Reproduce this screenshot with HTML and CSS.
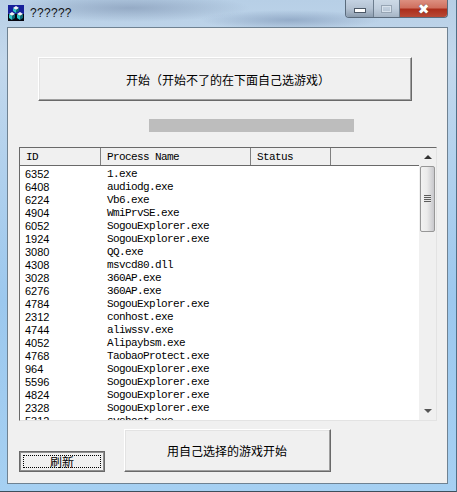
FILE: index.html
```html
<!DOCTYPE html>
<html lang="en">
<head>
    <meta charset="UTF-8">
    <meta name="viewport" content="width=device-width, initial-scale=1.0">
    <title>??????</title>
    <link rel="stylesheet" href="styles.css">
</head>
<body>
    <div class="window">
        <!-- Title bar -->
        <div class="titlebar">
            <div class="title">
                <svg class="app-icon" width="16" height="16" viewBox="0 0 16 16">
                    <rect width="16" height="16" fill="#16209a"/>
                    <rect y="9" width="16" height="7" fill="#05050f"/>
                    <path d="M8 1l3 2-3 2-3-2zM4 7l3 2-3 2-3-2zM12 7l3 2-3 2-3-2z" fill="#f0f6f6"/>
                    <path d="M5 3l3 2v3L5 6zM1 9l3 2v4l-3-2zM9 9l3 2v4l-3-2z" fill="#2fc8c8"/>
                    <path d="M11 3L8 5v3l3-2zM7 9l-3 2v4l3-2zM15 9l-3 2v4l3-2z" fill="#0e6a78"/>
                </svg>
                <span>??????</span>
            </div>
            <div class="controls">
                <div class="ctl ctl-min"><span></span></div>
                <div class="ctl ctl-max"><span></span></div>
                <div class="ctl ctl-close">&#10006;</div>
            </div>
        </div>

        <div class="client">
            <button class="btn btn-start">开始（开始不了的在下面自己选游戏）</button>
            <div class="progress"></div>

            <!-- Process list -->
            <div class="list">
                <div class="list-main">
                    <div class="list-head">
                        <div class="col col-id">ID</div>
                        <div class="col col-name">Process Name</div>
                        <div class="col col-status">Status</div>
                        <div class="col col-rest"></div>
                    </div>
                    <div class="rows">
                        <div class="row"><span class="cell-id">6352</span><span class="cell-name">1.exe</span></div>
                        <div class="row"><span class="cell-id">6408</span><span class="cell-name">audiodg.exe</span></div>
                        <div class="row"><span class="cell-id">6224</span><span class="cell-name">Vb6.exe</span></div>
                        <div class="row"><span class="cell-id">4904</span><span class="cell-name">WmiPrvSE.exe</span></div>
                        <div class="row"><span class="cell-id">6052</span><span class="cell-name">SogouExplorer.exe</span></div>
                        <div class="row"><span class="cell-id">1924</span><span class="cell-name">SogouExplorer.exe</span></div>
                        <div class="row"><span class="cell-id">3080</span><span class="cell-name">QQ.exe</span></div>
                        <div class="row"><span class="cell-id">4308</span><span class="cell-name">msvcd80.dll</span></div>
                        <div class="row"><span class="cell-id">3028</span><span class="cell-name">360AP.exe</span></div>
                        <div class="row"><span class="cell-id">6276</span><span class="cell-name">360AP.exe</span></div>
                        <div class="row"><span class="cell-id">4784</span><span class="cell-name">SogouExplorer.exe</span></div>
                        <div class="row"><span class="cell-id">2312</span><span class="cell-name">conhost.exe</span></div>
                        <div class="row"><span class="cell-id">4744</span><span class="cell-name">aliwssv.exe</span></div>
                        <div class="row"><span class="cell-id">4052</span><span class="cell-name">Alipaybsm.exe</span></div>
                        <div class="row"><span class="cell-id">4768</span><span class="cell-name">TaobaoProtect.exe</span></div>
                        <div class="row"><span class="cell-id">964</span><span class="cell-name">SogouExplorer.exe</span></div>
                        <div class="row"><span class="cell-id">5596</span><span class="cell-name">SogouExplorer.exe</span></div>
                        <div class="row"><span class="cell-id">4824</span><span class="cell-name">SogouExplorer.exe</span></div>
                        <div class="row"><span class="cell-id">2328</span><span class="cell-name">SogouExplorer.exe</span></div>
                        <div class="row"><span class="cell-id">5312</span><span class="cell-name">svchost.exe</span></div>
                    </div>
                </div>
                <div class="scrollbar">
                    <div class="arrow arrow-up"></div>
                    <div class="thumb"><span class="grip"></span></div>
                    <div class="track"></div>
                    <div class="arrow arrow-down"></div>
                </div>
            </div>

            <div class="bottom">
                <button class="btn btn-refresh"><span class="focus">刷新</span></button>
                <button class="btn btn-own">用自己选择的游戏开始</button>
            </div>
        </div>
    </div>
</body>
</html>
```

FILE: styles.css
```css
html, body {
    margin: 0;
    padding: 0;
    height: 492px;
    overflow: hidden;
}
body {
    font-family: "Noto Sans CJK SC", "Liberation Sans", sans-serif;
    background-color: #a9c6e2;
}
/* Aero glass frame */
.window {
    width: 457px;
    height: 492px;
    box-sizing: border-box;
    padding: 0 8px 7px 7px;
    display: flex;
    flex-direction: column;
    background:
        radial-gradient(ellipse 120px 14px at 130px 8px, rgba(120, 140, 170, 0.55), transparent),
        radial-gradient(ellipse 90px 10px at 290px 20px, rgba(110, 135, 170, 0.5), transparent),
        linear-gradient(180deg, #b7cfe6 0, #c3d8ec 60px, #9cc8ee 300px, #a6d0f2 100%);
    border-right: 1px solid #4f6f86;
    border-bottom: 1px solid #3d4f5c;
}
.titlebar {
    height: 27px;
    flex: none;
    display: flex;
    justify-content: space-between;
}
.title {
    display: flex;
    align-items: flex-start;
    gap: 6px;
    padding: 5px 0 0 1px;
    font: 12px "Liberation Sans", sans-serif;
    letter-spacing: 0.3px;
    color: #111;
}
.title span {
    line-height: 16px;
}
.controls {
    display: flex;
    height: 17px;
    border: 1px solid #5a6b7c;
    border-top: none;
    border-radius: 0 0 4px 4px;
    overflow: hidden;
}
.ctl {
    display: flex;
    align-items: center;
    justify-content: center;
}
.ctl-min {
    width: 27px;
    background: linear-gradient(180deg, #c4d2e2 0, #b4c2d2 50%, #8c9cae 100%);
    border-right: 1px solid #6d7d8e;
}
.ctl-min span {
    width: 10px;
    height: 3px;
    background: #fff;
    border: 1px solid #4c5866;
    margin-top: 4px;
}
.ctl-max {
    width: 25px;
    background: linear-gradient(180deg, #ccd9e6 0, #bfcddc 50%, #a6b5c5 100%);
    border-right: 1px solid #6d7d8e;
}
.ctl-max span {
    width: 9px;
    height: 6px;
    border: 1px solid #97a5b4;
    box-shadow: inset 0 0 0 1px #d8e2ec;
}
.ctl-close {
    width: 47px;
    font: bold 14px/1 "DejaVu Sans", sans-serif;
    color: #fff;
    background: linear-gradient(180deg, #dc8f80 0, #d0705f 45%, #ac2e1c 55%, #b84a36 100%);
    text-shadow: 0 0 1px #333;
}
.client {
    flex: 1;
    box-sizing: border-box;
    padding: 29px 11px 11px 11px;
    background-color: #f0f0f0;
    border: 1px solid #6f8292;
    display: flex;
    flex-direction: column;
}
.btn {
    font-family: "Noto Sans CJK SC", "Liberation Sans", sans-serif;
    font-size: 12px;
    text-spacing-trim: space-all;
    color: #000;
    background-color: #f0f0f0;
    padding: 0;
    border: 1px solid;
    border-color: #fff #696969 #696969 #fff;
    box-shadow: inset -1px -1px 0 #a0a0a0, inset 1px 1px 0 #e3e3e3;
}
.btn-start {
    width: 374px;
    height: 44px;
    margin-left: 19px;
    padding-left: 6px;
}
.progress {
    width: 205px;
    height: 13px;
    margin: 18px 0 15px 130px;
    background-color: #bdbdbd;
}
/* Process list */
.list {
    width: 418px;
    height: 274px;
    box-sizing: border-box;
    display: flex;
    background-color: #fff;
    border: 1px solid;
    border-color: #696969 #e3e3e3 #e3e3e3 #696969;
}
.list-main {
    flex: 1;
    min-width: 0;
    display: flex;
    flex-direction: column;
}
.list-head {
    flex: none;
    height: 18px;
    box-sizing: border-box;
    display: flex;
    background-color: #f0f0f0;
    border-bottom: 1px solid #696969;
}
.col {
    box-sizing: border-box;
    padding-left: 6px;
    border-right: 1px solid #808080;
    font: 11px/18px "Liberation Mono", monospace;
    letter-spacing: -0.6px;
    color: #000;
}
.col-id { width: 81px; }
.col-name { width: 150px; }
.col-status { width: 80px; }
.col-rest { flex: 1; border-right: none; }
.rows {
    flex: 1;
    overflow: hidden;
    padding-top: 2px;
}
.row {
    display: flex;
    height: 13px;
}
.cell-id {
    width: 87px;
    padding-left: 5px;
    box-sizing: border-box;
    font: 11px/13px "Liberation Sans", sans-serif;
}
.cell-name {
    font: 11px/13px "Liberation Mono", monospace;
    letter-spacing: -0.6px;
}
/* Scrollbar */
.scrollbar {
    width: 17px;
    flex: none;
    display: flex;
    flex-direction: column;
    background-color: #f0f0f0;
}
.arrow {
    flex: none;
    height: 18px;
    display: flex;
    align-items: center;
    justify-content: center;
}
.arrow::before {
    content: "";
    border-left: 4px solid transparent;
    border-right: 4px solid transparent;
}
.arrow-up::before { border-bottom: 4px solid #333; }
.arrow-down::before { border-top: 4px solid #555; }
.thumb {
    flex: none;
    height: 66px;
    margin: 0 1px;
    box-sizing: border-box;
    border: 1px solid #979797;
    border-radius: 2px;
    background: linear-gradient(90deg, #f2f2f2 0, #ebebeb 45%, #c8c8cc 100%);
    display: flex;
    align-items: center;
    justify-content: center;
}
.grip {
    width: 7px;
    height: 8px;
    background: repeating-linear-gradient(180deg, #5c5c5c 0, #5c5c5c 1px, #e8e8e8 1px, #e8e8e8 2px);
}
.track {
    flex: 1;
}
/* Bottom buttons */
.bottom {
    display: flex;
    align-items: flex-end;
    gap: 19px;
    margin-top: 8px;
}
.btn-refresh {
    width: 86px;
    height: 21px;
    box-sizing: border-box;
    border: 1px solid #696969;
    box-shadow: inset 0 0 0 1px #8f8f8f;
    display: flex;
    padding: 3px;
}
.focus {
    flex: 1;
    display: flex;
    align-items: center;
    justify-content: center;
    line-height: 12px;
    border: 1px dotted #000;
}
.btn-own {
    width: 207px;
    height: 43px;
    padding-right: 1px;
}
```
